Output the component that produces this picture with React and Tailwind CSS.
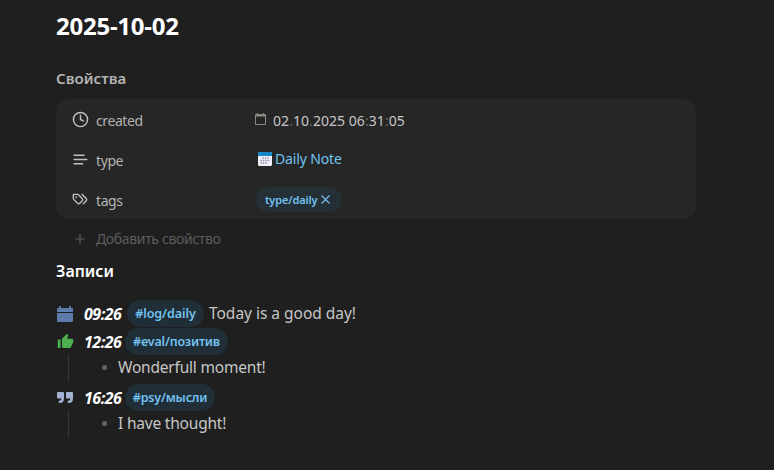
import { Clock, Plus, X } from 'lucide-react';

const TextIcon = () => (
    <svg className="w-[17px] h-[17px] shrink-0" viewBox="0 0 24 24" fill="none" stroke="currentColor" strokeWidth="2" strokeLinecap="round">
        <path d="M17 6.1H3M21 12.1H3M15.1 18H3" />
    </svg>
);

const TagsIcon = () => (
    <svg className="w-4 h-4" viewBox="0 0 24 24" fill="none" stroke="currentColor" strokeWidth="2" strokeLinecap="round" strokeLinejoin="round">
        <path d="m15 5 6.3 6.3a2.4 2.4 0 0 1 0 3.4L17 19" />
        <path d="M9.586 5.586A2 2 0 0 0 8.172 5H3a1 1 0 0 0-1 1v5.172a2 2 0 0 0 .586 1.414L8.29 18.29a2.426 2.426 0 0 0 3.42 0l3.58-3.58a2.426 2.426 0 0 0 0-3.42z" />
        <circle cx="6.5" cy="9.5" r=".5" fill="currentColor" />
    </svg>
);

const DateIcon = () => (
    <svg className="w-[11px] h-3 text-[#8c8982]" viewBox="0 0 11 12" fill="none" stroke="currentColor">
        <path d="M.5 1.5h10v10H.5z" />
        <path d="M0 2.5h11M0 3h11M2.5 0v2M8.5 0v2" />
    </svg>
);

const NoteIcon = () => (
    <svg className="w-[14px] h-[14px]" viewBox="0 0 14 14">
        <rect width="14" height="14" rx="1.5" fill="#f1eff7" />
        <path d="M0 4V1.5A1.5 1.5 0 0 1 1.5 0h11A1.5 1.5 0 0 1 14 1.5V4z" fill="#1688c9" />
        <path d="M4.5 6h7M2.5 8.5h9M2.5 11h7" stroke="#8e86a5" strokeWidth="1.3" strokeDasharray="1.3 1.1" />
    </svg>
);

const CalendarIcon = () => (
    <svg className="w-4 h-4" viewBox="0 0 16 16" fill="#5c7cab">
        <path d="M0 6V3.2Q0 2 1.2 2H2V.6Q2 0 2.6 0h.8Q4 0 4 .6V2h8V.6q0-.6.6-.6h.8q.6 0 .6.6V2h.8Q16 2 16 3.2V6z" />
        <path d="M0 7h16v7.8q0 1.2-1.2 1.2H1.2Q0 16 0 14.8z" />
    </svg>
);

const ThumbIcon = () => (
    <svg className="w-[17px] h-[17px]" viewBox="0 0 24 24" fill="#4caf50">
        <path d="M23 10a2 2 0 0 0-2-2h-6.32l.96-4.57c.02-.1.03-.21.03-.32 0-.41-.17-.79-.44-1.06L14.17 1 7.59 7.58C7.22 7.95 7 8.45 7 9v10a2 2 0 0 0 2 2h9c.83 0 1.54-.5 1.84-1.22l3.02-7.05c.09-.23.14-.47.14-.73v-2M1 21h4V9H1v12z" />
    </svg>
);

const QuoteIcon = () => (
    <svg className="w-4 h-[11px]" viewBox="0 0 16 11" fill="#a3b1d3">
        <path d="M1 0h5q1 0 1 1v5.5Q7 11 2.5 11H1.8V8.7h.7q2-.1 2-2.2H1Q0 6.5 0 5.5V1Q0 0 1 0z" />
        <path d="M10 0h5q1 0 1 1v5.5Q16 11 11.5 11h-.7V8.7h.7q2-.1 2-2.2H10q-1 0-1-1V1Q9 0 10 0z" />
    </svg>
);

function Property({ icon, name, children }) {
    return (
        <div className="flex h-10 items-center pl-4">
            <div className="flex w-4 justify-center text-[#c2c2c2]">{icon}</div>
            <div className="ml-2 w-[159px] pt-[3px] text-sm tracking-[-0.4px] text-[#b3b3b3]">{name}</div>
            {children}
        </div>
    );
}

function Entry({ icon, time, tag, text }) {
    return (
        <div className="flex h-[27px] items-center">
            <div className="flex w-[18px] justify-center">{icon}</div>
            <span className="ml-2.5 w-[41px] text-base font-bold italic tracking-[-0.5px] whitespace-nowrap text-white">{time}</span>
            {tag}
            {text && <span className="ml-[5px] text-[15.5px] tracking-[-0.02px] text-[#c6c6c6]">{text}</span>}
        </div>
    );
}

function Reply({ children }) {
    return (
        <div className="ml-3 -mt-px mb-[3px] flex h-[27px] items-center border-l border-[#383838]">
            <div className="ml-[33px] h-[5px] w-[5px] rounded-full bg-[#666]" />
            <span className="ml-[11px] text-[15.5px] tracking-[-0.2px] text-[#c6c6c6]">{children}</span>
        </div>
    );
}

export default function App() {
    return (
        <div className="h-[470px] w-full overflow-hidden bg-[#1f1f1f] pl-14 pt-2 font-['Noto_Sans',sans-serif]">
            <h1 className="h-9 text-2xl leading-9 font-bold tracking-[-0.25px] text-white">2025-10-02</h1>
            <h2 className="mt-[22px] h-6 text-[15px] leading-6 font-semibold tracking-[0.05px] text-[#b3b3b3]">Свойства</h2>

            <div className="mt-[9px] h-[120px] w-[640px] rounded-xl bg-[#262626]">
                <Property icon={<Clock size={17} className="shrink-0" />} name="created">
                    <DateIcon />
                    <div className="ml-[7px] pt-[3px] text-sm tracking-[0.05px] text-[#c6c6c6]">
                        02<span className="text-[#666]">.</span>10<span className="text-[#666]">.</span>2025{' '}
                        06<span className="text-[#666]">:</span>31<span className="text-[#666]">:</span>05
                    </div>
                </Property>
                <Property icon={<TextIcon />} name="type">
                    <div className="ml-[3px] flex items-center gap-[3px] text-sm tracking-[-0.15px] text-[#72c2f0]">
                        <NoteIcon />
                        Daily Note
                    </div>
                </Property>
                <Property icon={<TagsIcon />} name="tags">
                    <div className="ml-px flex h-[25px] w-[86px] items-center rounded-full bg-[#252f36] pl-[9px] text-[11px] font-semibold tracking-[-0.15px] text-[#72c2f0]">
                        <span className="pt-[3px]">type/daily</span>
                        <X size={15} className="ml-px" strokeWidth={1.75} />
                    </div>
                </Property>
            </div>

            <div className="flex h-10 items-center gap-2 pl-4 text-sm tracking-[-0.35px] text-[#5c5c5c]">
                <Plus size={16} strokeWidth={1.75} />
                Добавить свойство
            </div>

            <h2 className="h-6 text-base leading-6 font-semibold text-white">Записи</h2>

            <div className="mt-[17px]">
                <div className="mb-px">
                    <Entry
                        icon={<CalendarIcon />}
                        time="09:26"
                        tag={<span className="ml-[2px] flex h-[27px] w-[77px] items-center justify-center rounded-full bg-[#202e38] pt-px text-[12.5px] font-semibold tracking-[-0.05px] text-[#72c2f0]">#log/daily</span>}
                        text="Today is a good day!"
                    />
                </div>
                <Entry
                    icon={<ThumbIcon />}
                    time="12:26"
                    tag={<span className="flex h-[27px] w-[103px] items-center justify-center rounded-full bg-[#202e38] pt-px text-[12.5px] font-semibold tracking-[-0.2px] text-[#72c2f0]">#eval/позитив</span>}
                />
                <Reply>Wonderfull moment!</Reply>
                <Entry
                    icon={<QuoteIcon />}
                    time="16:26"
                    tag={<span className="flex h-[27px] w-[90px] items-center justify-center rounded-full bg-[#202e38] pt-px text-[12.5px] font-semibold tracking-[-0.2px] text-[#72c2f0]">#psy/мысли</span>}
                />
                <Reply>I have thought!</Reply>
            </div>
        </div>
    );
}
